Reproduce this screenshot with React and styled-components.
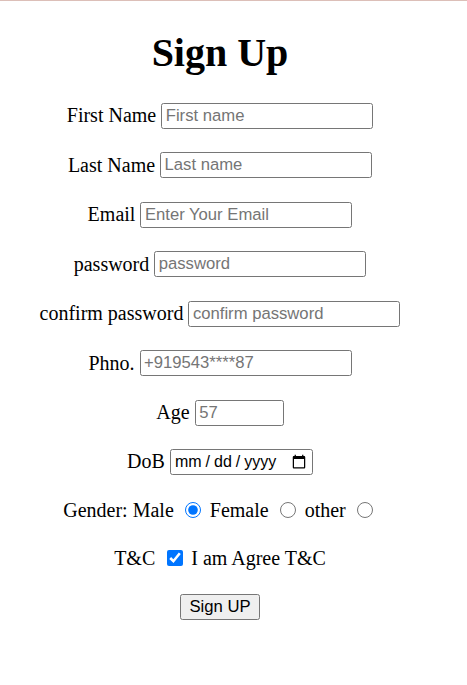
import React from "react";
import styled, { createGlobalStyle } from "styled-components";

const Global = createGlobalStyle`
  html, body { margin: 0; padding: 0; background: #ffffff; }
  body {
    border-top: 1px solid #dcbfb8;
    font-family: "Liberation Serif", "Times New Roman", serif;
    color: #000;
  }
`;

const Page = styled.div`
  width: 440px;
  padding-top: 29px;
  padding-bottom: 40px;
`;

const Title = styled.h1`
  margin: 0;
  font-size: 40px;
  line-height: 46px;
  font-weight: bold;
  text-align: center;
`;

const Form = styled.form`
  margin-top: 24.75px;
  display: flex;
  flex-direction: column;
  gap: 20px;
`;

const Row = styled.div`
  display: flex;
  align-items: center;
  justify-content: center;
  height: ${(p) => p.$h || 29.5}px;
  font-size: 20px;
  white-space: pre;
`;

const Label = styled.label`
  margin-right: 5px;
  line-height: 23px;
`;

const Field = styled.input`
  box-sizing: border-box;
  width: ${(p) => p.$w || 212}px;
  height: 26px;
  border: 1px solid #767676;
  border-radius: 2.5px;
  padding: 1px 3.5px;
  font-family: "Liberation Sans", Arial, sans-serif;
  font-size: 16.67px;
  color: #000;
  background: #fff;
  &::placeholder { color: #757575; }
  &:focus { outline: none; }
`;

const DateField = styled(Field)`
  width: 143px;
  padding: 1px 2.5px 1px 3px;
  font-family: "Liberation Sans", Arial, sans-serif;
  font-size: 16px;
  &::-webkit-datetime-edit-text { padding: 0 3px; }
`;

const Radio = styled.input.attrs({ type: "radio" })`
  width: 16px;
  height: 16px;
  margin: 0 3.75px 0 6.25px;
  accent-color: #0075ff;
`;

const Check = styled.input.attrs({ type: "checkbox" })`
  width: 16px;
  height: 16px;
  margin: 0 3.75px 0 6.25px;
  accent-color: #0075ff;
`;

const Text = styled.span`
  line-height: 23px;
`;

const Button = styled.button`
  box-sizing: border-box;
  width: 80px;
  height: 25.5px;
  padding: 0;
  border: 1px solid #767676;
  border-radius: 2.5px;
  background: #efefef;
  font-family: "Liberation Sans", Arial, sans-serif;
  font-size: 16.67px;
  color: #000;
`;

const fields = [
  { label: "First Name", ph: "First name", type: "text" },
  { label: "Last Name", ph: "Last name", type: "text" },
  { label: "Email", ph: "Enter Your Email", type: "email" },
  { label: "password", ph: "password", type: "password" },
  { label: "confirm password", ph: "confirm password", type: "password" },
  { label: "Phno.", ph: "+919543****87", type: "tel" },
];

export default function App() {
  return (
    <>
      <Global />
      <Page>
        <Title>Sign Up</Title>
        <Form onSubmit={(e) => e.preventDefault()}>
          {fields.map((f) => (
            <Row key={f.label}>
              <Label>{f.label}</Label>
              <Field type={f.type} placeholder={f.ph} />
            </Row>
          ))}
          <Row>
            <Label>Age</Label>
            <Field type="number" placeholder="57" $w={89} />
          </Row>
          <Row $h={29}>
            <Label>DoB</Label>
            <DateField type="date" />
          </Row>
          <Row $h={28}>
            <Text>Gender: Male </Text>
            <Radio name="g" defaultChecked />
            <Text> Female </Text>
            <Radio name="g" />
            <Text> other </Text>
            <Radio name="g" />
          </Row>
          <Row $h={28}>
            <Text>T&amp;C </Text>
            <Check defaultChecked />
            <Text> I am Agree T&amp;C</Text>
          </Row>
          <Row $h={29}>
            <Button type="submit">Sign UP</Button>
          </Row>
        </Form>
      </Page>
    </>
  );
}
